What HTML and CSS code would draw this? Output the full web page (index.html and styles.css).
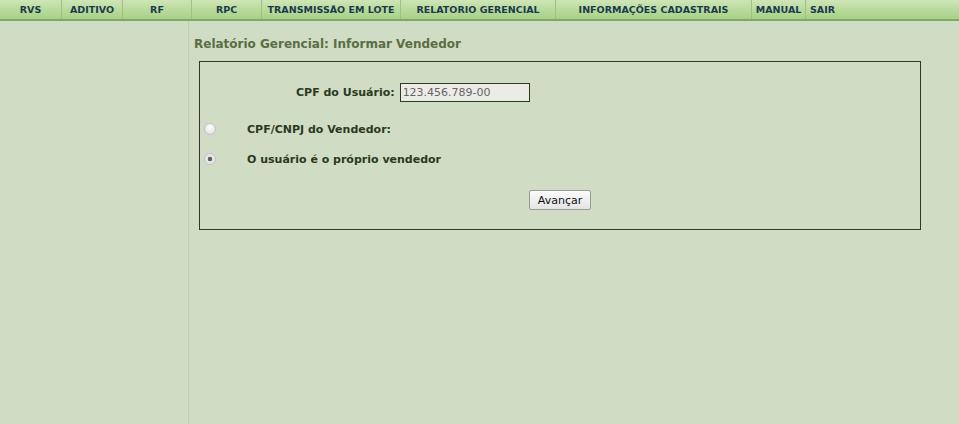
FILE: index.html
```html
<!DOCTYPE html>
<html lang="pt-BR">
<head>
<meta charset="utf-8">
<title>Relatório Gerencial</title>
<link rel="stylesheet" href="styles.css">
</head>
<body>
<nav class="menu">
  <a class="menu-item w-rvs" href="#">RVS</a>
  <a class="menu-item w-aditivo" href="#">ADITIVO</a>
  <a class="menu-item w-rf" href="#">RF</a>
  <a class="menu-item w-rpc" href="#">RPC</a>
  <a class="menu-item w-lote" href="#">TRANSMISSÃO EM LOTE</a>
  <a class="menu-item w-rel" href="#">RELATORIO GERENCIAL</a>
  <a class="menu-item w-info" href="#">INFORMAÇÕES CADASTRAIS</a>
  <a class="menu-item w-manual" href="#">MANUAL</a>
  <a class="menu-item menu-last" href="#">SAIR</a>
</nav>
<div class="page">
  <aside class="sidebar"></aside>
  <main class="content">
    <h1 class="title">Relatório Gerencial: Informar Vendedor</h1>
    <form class="box">
      <div class="row-cpf">
        <label class="label" for="cpf">CPF do Usuário:</label>
        <input id="cpf" class="field" type="text" value="123.456.789-00" readonly>
      </div>
      <label class="radio-row radio-first">
        <input class="radio" type="radio" name="vend">
        <span class="label">CPF/CNPJ do Vendedor:</span>
      </label>
      <label class="radio-row">
        <input class="radio" type="radio" name="vend" checked>
        <span class="label">O usuário é o próprio vendedor</span>
      </label>
      <div class="actions">
        <button class="btn" type="button">Avançar</button>
      </div>
    </form>
  </main>
</div>
</body>
</html>
```
FILE: styles.css
```css
html, body {
  margin: 0;
  padding: 0;
  height: 100%;
}
body {
  background: #d0dcc4;
  font-family: "DejaVu Sans", Verdana, sans-serif;
  color: #2a3a20;
}
.menu {
  display: flex;
  height: 19px;
  background: linear-gradient(#cfe6b8, #b5d897 60%, #a9d288);
  border-bottom: 2px solid #7faa5f;
}
.menu-item {
  display: flex;
  align-items: center;
  justify-content: center;
  border-right: 1px solid #9cc27d;
  font-size: 9.5px;
  font-weight: bold;
  color: #1c3a4e;
  text-decoration: none;
  white-space: nowrap;
}
.w-rvs { width: 61px; }
.w-aditivo { width: 60px; }
.w-rf { width: 68px; }
.w-rpc { width: 69px; }
.w-lote { width: 138px; }
.w-rel { width: 154px; }
.w-info { width: 195px; }
.w-manual { width: 53px; }
.menu-last {
  flex: 1;
  justify-content: flex-start;
  padding-left: 4px;
  border-right: none;
}
.page {
  display: flex;
  height: calc(100% - 21px);
}
.sidebar {
  width: 188px;
  border-right: 1px solid #bccdb0;
  flex-shrink: 0;
}
.content {
  flex: 1;
  padding: 15px 38px 0 5px;
}
.title {
  margin: 0 0 9px;
  font-size: 12px;
  font-weight: bold;
  color: #5a6e45;
  line-height: 16px;
}
.box {
  margin: 0 0 0 5px;
  border: 1px solid #2b3a22;
  height: 169px;
  box-sizing: border-box;
  padding-top: 21px;
}
.row-cpf {
  display: flex;
  align-items: center;
  padding-left: 96px;
  gap: 5px;
}
.label {
  font-size: 11px;
  font-weight: bold;
  color: #2a3a20;
}
.field {
  width: 130px;
  height: 19px;
  box-sizing: border-box;
  border: 1px solid #2b3a22;
  background: #ececE6;
  font-family: "DejaVu Sans", Verdana, sans-serif;
  font-size: 11px;
  color: #666;
  padding: 0 2px;
}
.radio-row {
  display: flex;
  align-items: center;
  height: 14px;
  margin-top: 16px;
}
.radio-first {
  margin-top: 20px;
}
.radio {
  appearance: none;
  -webkit-appearance: none;
  margin: 0 0 0 4px;
  width: 12px;
  height: 12px;
  flex-shrink: 0;
  border-radius: 50%;
  border: 1px solid #c4c4c4;
  background: radial-gradient(circle at 50% 35%, #ffffff, #e6e6e6 70%, #d8d8d8);
  box-sizing: border-box;
}
.radio:checked {
  background: radial-gradient(circle, #555 0, #666 2px, #e6e6e6 2.6px, #e6e6e6 70%, #d8d8d8);
}
.radio-row .label {
  margin-left: 31px;
}
.actions {
  display: flex;
  justify-content: center;
  margin-top: 24px;
}
.btn {
  font-family: "DejaVu Sans", Verdana, sans-serif;
  font-size: 11px;
  height: 20px;
  padding: 0 8px;
  border: 1px solid #9a9a9a;
  border-radius: 2px;
  background: linear-gradient(#fbfbfb, #e4e4e4);
  color: #111;
}
```
